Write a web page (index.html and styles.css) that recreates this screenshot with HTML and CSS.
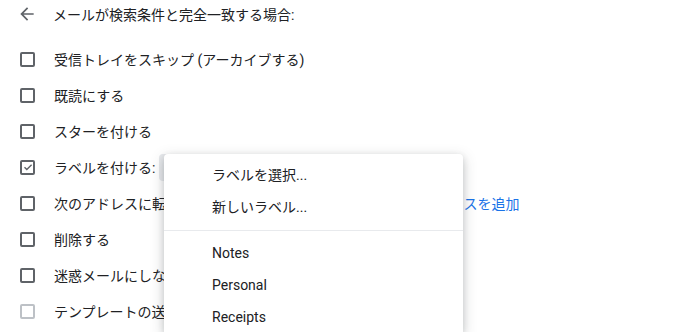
FILE: index.html
```html
<!DOCTYPE html>
<html lang="ja">
<head>
    <meta charset="UTF-8">
    <title>フィルタ</title>
    <link rel="stylesheet" href="styles.css">
</head>
<body>
    <div class="filter">
        <div class="header">
            <svg class="back" width="20" height="20" viewBox="0 0 24 24"><path d="M20 11H7.83l5.59-5.59L12 4l-8 8 8 8 1.41-1.41L7.83 13H20v-2z" fill="#5f6368"/></svg>
            <span>メールが検索条件と完全一致する場合:</span>
        </div>
        <div class="options">
            <div class="row"><span class="box"></span><span>受信トレイをスキップ (アーカイブする)</span></div>
            <div class="row"><span class="box"></span><span>既読にする</span></div>
            <div class="row"><span class="box"></span><span>スターを付ける</span></div>
            <div class="row">
                <span class="box checked"><svg width="10" height="10" viewBox="0 0 10 10"><path d="M1.5 5.2l2.3 2.3 4.8-4.8" fill="none" stroke="#5f6368" stroke-width="1.4"/></svg></span>
                <span>ラベルを付ける:</span>
                <span class="select"></span>
            </div>
            <div class="row"><span class="box"></span><span>次のアドレスに転送する:</span><a class="link">転送先アドレスを追加</a></div>
            <div class="row"><span class="box"></span><span>削除する</span></div>
            <div class="row"><span class="box"></span><span>迷惑メールにしない</span></div>
            <div class="row disabled"><span class="box"></span><span>テンプレートの送信:</span></div>
        </div>
        <div class="menu">
            <div class="item">ラベルを選択...</div>
            <div class="item">新しいラベル...</div>
            <div class="sep"></div>
            <div class="item">Notes</div>
            <div class="item">Personal</div>
            <div class="item">Receipts</div>
        </div>
    </div>
</body>
</html>
```

FILE: styles.css
```css
body {
    margin: 0;
    background-color: #fff;
    font-family: Roboto, "Noto Sans CJK JP", sans-serif;
    font-size: 14px;
    color: #202124;
    overflow: hidden;
}
.filter {
    position: relative;
    height: 332px;
    overflow: hidden;
}
.header {
    display: flex;
    align-items: center;
    height: 28px;
    padding-left: 17px;
}
.back {
    margin-right: 16px;
}
.options {
    margin-top: 13px;
}
.row {
    display: flex;
    align-items: center;
    height: 36px;
    padding-left: 20px;
}
.box {
    width: 11px;
    height: 11px;
    border: 2px solid #5f6368;
    border-radius: 2px;
    margin-right: 19px;
    display: flex;
    align-items: center;
    justify-content: center;
}
.disabled .box {
    border-color: #bdc1c6;
}
.select {
    width: 140px;
    height: 27px;
    margin-left: 4px;
    background-color: #e8eaed;
    border-radius: 4px;
}
.link {
    color: #1a73e8;
    margin-left: 168px;
}
.menu {
    position: absolute;
    left: 164px;
    top: 154px;
    width: 299px;
    height: 173px;
    padding-top: 5px;
    background-color: #fff;
    border-radius: 4px 4px 0 0;
    box-shadow: 0 2px 6px rgba(60, 64, 67, 0.15), 0 4px 14px rgba(60, 64, 67, 0.25);
    overflow: hidden;
}
.item {
    height: 32px;
    line-height: 32px;
    padding-left: 48px;
    color: #202124;
}
.sep {
    height: 1px;
    margin: 7px 0 6px;
    background-color: #e8eaed;
}
```
